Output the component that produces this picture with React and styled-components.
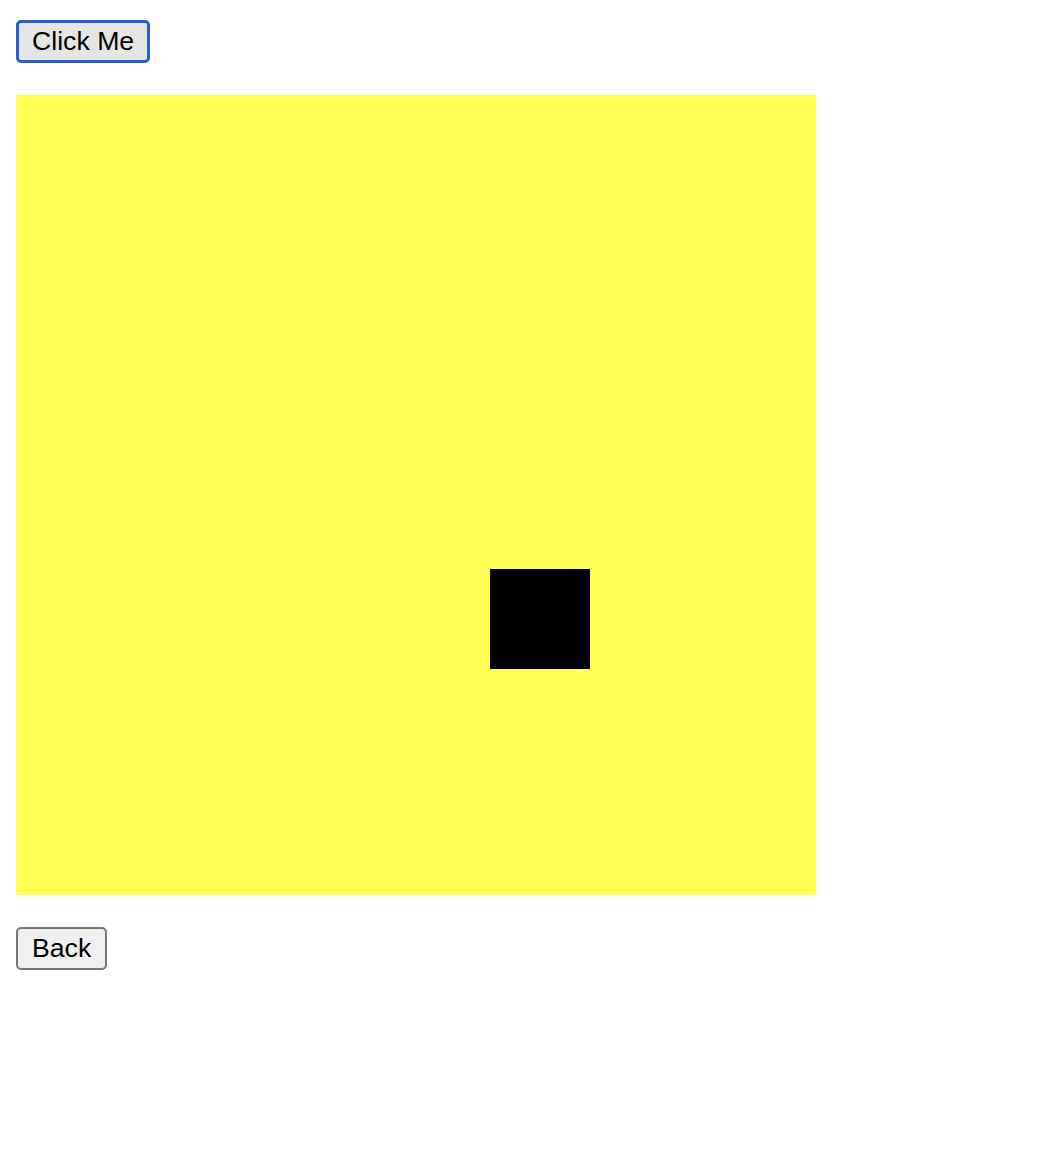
import { styled, createGlobalStyle } from "styled-components";

const GlobalStyle = createGlobalStyle`
  html, body {
    margin: 0;
    background: #ffffff;
  }
`;

const Page = styled.div`
  display: flex;
  flex-direction: column;
  align-items: flex-start;
  padding: 20px 16px;
`;

const Button = styled.button`
  font-family: "Liberation Sans", Arial, sans-serif;
  font-size: 26.67px;
  line-height: normal;
  color: #000;
  background: ${(p) => (p.$focused ? "#e5e5e5" : "#efefef")};
  border: ${(p) => (p.$focused ? "3px solid #2a5fc8" : "2px solid #767676")};
  border-radius: 5px;
  padding: ${(p) => (p.$focused ? "3px 13px" : "4px 14px")};
  margin: 0;
  cursor: pointer;
`;

const Canvas = styled.div`
  position: relative;
  width: 800px;
  height: 800px;
  background: #ffff55;
  margin: 32px 0;
`;

const Block = styled.div`
  position: absolute;
  width: 100px;
  height: 100px;
  background: #000;
`;

export default function App() {
  const block = { x: 474, y: 474 };

  return (
    <>
      <GlobalStyle />
      <Page>
        <Button $focused>Click Me</Button>
        <Canvas>
          <Block style={{ left: block.x, top: block.y }} />
        </Canvas>
        <Button>Back</Button>
      </Page>
    </>
  );
}
